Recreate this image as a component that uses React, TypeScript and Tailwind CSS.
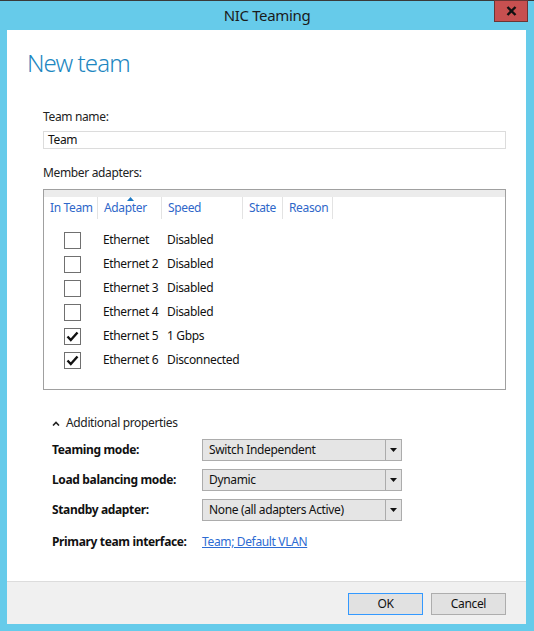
import React from "react";

type Adapter = { name: string; speed: string; inTeam: boolean };

const adapters: Adapter[] = [
  { name: "Ethernet", speed: "Disabled", inTeam: false },
  { name: "Ethernet 2", speed: "Disabled", inTeam: false },
  { name: "Ethernet 3", speed: "Disabled", inTeam: false },
  { name: "Ethernet 4", speed: "Disabled", inTeam: false },
  { name: "Ethernet 5", speed: "1 Gbps", inTeam: true },
  { name: "Ethernet 6", speed: "Disconnected", inTeam: true },
];

function CheckBox({ checked }: { checked: boolean }) {
  return (
    <div className="flex h-[17px] w-[17px] items-center justify-center border border-[#707070] bg-white">
      {checked && (
        <svg width="13" height="11" viewBox="0 0 13 11">
          <path d="M1.5 5.5 L4.8 9 L11.5 1.5" fill="none" stroke="#111" strokeWidth="2.4" />
        </svg>
      )}
    </div>
  );
}

function Dropdown({ value }: { value: string }) {
  return (
    <div className="flex h-[22px] w-[200px] border border-[#acacac] bg-[#e5e5e5]">
      <div className="flex flex-1 items-center pl-[6px] text-[12px] text-[#111]">{value}</div>
      <div className="flex w-[16px] items-center justify-center border-l border-[#acacac]">
        <svg width="7" height="4" viewBox="0 0 7 4">
          <path d="M0 0 H7 L3.5 4 Z" fill="#111" />
        </svg>
      </div>
    </div>
  );
}

function PropRow({ label, children }: { label: string; children: React.ReactNode }) {
  return (
    <div className="flex items-center">
      <div className="w-[150px] text-[12px] font-bold tracking-[-0.35px] text-[#111]">{label}</div>
      {children}
    </div>
  );
}

const headers = [
  { label: "In Team", w: "w-[54px]" },
  { label: "Adapter", w: "w-[64px]" },
  { label: "Speed", w: "w-[81px]" },
  { label: "State", w: "w-[40px]" },
  { label: "Reason", w: "w-[50px]" },
];

export default function App() {
  return (
    <div
      className="flex h-[631px] w-[534px] flex-col border-t border-[#3a3a3a] bg-[#66cbea] tracking-[-0.35px]"
      style={{ fontFamily: '"Noto Sans", "Open Sans", sans-serif' }}
    >
      {/* title bar */}
      <div className="relative flex h-[29px] items-center justify-center">
        <span className="text-[15px] text-[#1b1b1b]">NIC Teaming</span>
        <div className="absolute right-[6px] top-[-1px] flex h-[22px] w-[34px] items-center justify-center border border-[#6b3535] bg-[#c75050]">
          <svg width="11" height="10" viewBox="0 0 11 10">
            <path d="M1.5 1 L9.5 9 M9.5 1 L1.5 9" stroke="#111" strokeWidth="2.4" />
          </svg>
        </div>
      </div>

      {/* client */}
      <div className="ml-[7px] mr-[8px] flex h-[594px] flex-col bg-white">
        <div className="flex flex-1 flex-col pl-[36px] pr-[20px]">
          <h1 className="-ml-[16px] mt-[17px] h-[32px] text-[24px] font-light leading-[32px] tracking-[-0.9px] text-[#1d87c1]">
            New team
          </h1>

          <div className="mt-[30px] h-[16px] text-[12px] leading-[16px] text-[#222]">Team name:</div>
          <div className="mt-[6px] flex h-[18px] items-center border border-[#dcdcdc] pl-[4px] text-[12px] text-[#111]">
            Team
          </div>

          <div className="mt-[16px] h-[16px] text-[12px] leading-[16px] text-[#222]">Member adapters:</div>
          <div className="mt-[8px] flex h-[201px] flex-col border border-[#a0a0a0]">
            <div className="h-[7px] bg-[#ececec]" />
            <div className="flex h-[22px]">
              {headers.map((h, i) => (
                <div
                  key={h.label}
                  className={`relative flex items-center border-r border-[#e3e3e3] pl-[6px] text-[12px] text-[#2f67c9] ${h.w}`}
                >
                  {i === 1 && (
                    <svg className="absolute left-[29px] top-[0px]" width="7" height="4" viewBox="0 0 7 4">
                      <path d="M0 4 H7 L3.5 0 Z" fill="#1e7ac4" />
                    </svg>
                  )}
                  {h.label}
                </div>
              ))}
            </div>
            <div className="flex flex-col pt-[9px]">
              {adapters.map((a) => (
                <div key={a.name} className="flex h-[24px] items-center text-[12px] text-[#111]">
                  <div className="flex w-[54px] justify-center pl-[3px]">
                    <CheckBox checked={a.inTeam} />
                  </div>
                  <div className="w-[64px] pl-[5px]">{a.name}</div>
                  <div className="pl-[5px]">{a.speed}</div>
                </div>
              ))}
            </div>
          </div>

          <div className="mt-[25px] flex h-[16px] items-center pl-[9px] text-[12px] text-[#222]">
            <svg width="8" height="5" viewBox="0 0 8 5" className="mr-[6px]">
              <path d="M1 4.5 L4 1.5 L7 4.5" fill="none" stroke="#222" strokeWidth="1.6" />
            </svg>
            Additional properties
          </div>

          <div className="mt-[8px] flex flex-col gap-[8px] pl-[9px]">
            <PropRow label="Teaming mode:">
              <Dropdown value="Switch Independent" />
            </PropRow>
            <PropRow label="Load balancing mode:">
              <Dropdown value="Dynamic" />
            </PropRow>
            <PropRow label="Standby adapter:">
              <Dropdown value="None (all adapters Active)" />
            </PropRow>
          </div>
          <div className="mt-[12px] pl-[9px]">
            <PropRow label="Primary team interface:">
              <span className="text-[12px] font-normal text-[#2d6bd3] underline">Team; Default VLAN</span>
            </PropRow>
          </div>
        </div>

        {/* footer */}
        <div className="flex h-[43px] justify-end gap-[8px] border-t border-[#dcdcdc] bg-[#f0f0f0] pr-[20px] pt-[11px]">
          <button className="flex h-[22px] w-[75px] items-center justify-center border border-[#3399ff] bg-[#e1e1e1] text-[12px] text-[#111]">
            OK
          </button>
          <button className="flex h-[22px] w-[75px] items-center justify-center border border-[#adadad] bg-[#e1e1e1] text-[12px] text-[#111]">
            Cancel
          </button>
        </div>
      </div>
    </div>
  );
}
